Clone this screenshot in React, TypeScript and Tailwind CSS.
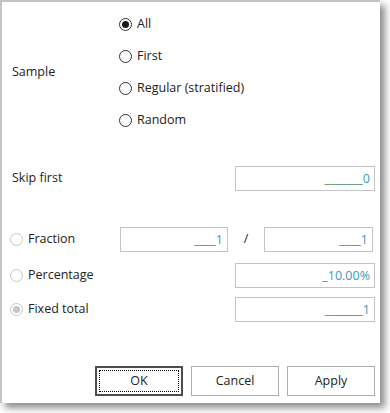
import React from "react";

function Radio({ state }: { state: "on" | "off" | "dis" | "dison" }) {
  const border = state === "on" || state === "off" ? "border-[#333333]" : "border-[#c6c6c6]";
  return (
    <span className={`relative inline-flex h-[13px] w-[13px] shrink-0 items-center justify-center rounded-full border bg-white ${border}`}>
      {state === "on" && <span className="h-[7px] w-[7px] rounded-full bg-[#1a1a1a]" />}
      {state === "dison" && <span className="h-[7px] w-[7px] rounded-full bg-[#c6c6c6]" />}
    </span>
  );
}

function Field({ under, value, w }: { under: string; value: string; w: string }) {
  return (
    <div className={`flex h-full ${w} items-center justify-end border border-[#c4c4c4] bg-white pr-[4px] pt-[2px]`}>
      <span className="text-[#4f8f6c]">{under}</span>
      <span className="text-[#3f97bf]">{value}</span>
    </div>
  );
}

export default function App() {
  return (
    <div className="h-[413px] w-[390px] bg-white" style={{ fontFamily: '"Open Sans", "Noto Sans", sans-serif' }}>
      <div className="flex h-[403px] w-[380px] flex-col border-l-2 border-t-2 border-[#c4c4c4] bg-white text-[12.5px] leading-none text-[#222222] shadow-[5px_5px_7px_rgba(0,0,0,0.45)]">
        {/* Sample */}
        <div className="mt-[6px] flex h-[128px]">
          <div className="flex w-[117px] items-center pl-[10px]">Sample</div>
          <div className="flex flex-col">
            {[
              ["All", "on"],
              ["First", "off"],
              ["Regular (stratified)", "off"],
              ["Random", "off"],
            ].map(([t, s]) => (
              <div key={t} className="flex h-[32px] items-center gap-[5px]">
                <Radio state={s as "on" | "off"} />
                <span>{t}</span>
              </div>
            ))}
          </div>
        </div>

        {/* Skip first */}
        <div className="mt-[30px] flex h-[25px] items-center">
          <div className="flex-1 pl-[10px]">Skip first</div>
          <div className="mr-[5px] h-full">
            <Field under="_______" value="0" w="w-[140px]" />
          </div>
        </div>

        {/* Fraction */}
        <div className="mt-[36px] flex h-[25px] items-center">
          <div className="flex w-[118px] items-center gap-[5px] pl-[8px]">
            <Radio state="dis" />
            <span>Fraction</span>
          </div>
          <Field under="____" value="1" w="w-[108px]" />
          <div className="w-[36px] text-center">/</div>
          <Field under="____" value="1" w="w-[109px]" />
        </div>

        {/* Percentage */}
        <div className="mt-[11px] flex h-[25px] items-center">
          <div className="flex flex-1 items-center gap-[5px] pl-[8px]">
            <Radio state="dis" />
            <span>Percentage</span>
          </div>
          <div className="mr-[5px] h-full">
            <Field under="_" value="10.00%" w="w-[140px]" />
          </div>
        </div>

        {/* Fixed total */}
        <div className="mt-[9px] flex h-[25px] items-center">
          <div className="flex flex-1 items-center gap-[5px] pl-[8px]">
            <Radio state="dison" />
            <span>Fixed total</span>
          </div>
          <div className="mr-[5px] h-full">
            <Field under="_______" value="1" w="w-[140px]" />
          </div>
        </div>

        {/* Buttons */}
        <div className="mt-[44px] flex justify-end gap-[8px] pr-[5px]">
          <button className="flex h-[30px] w-[88px] items-center justify-center border-2 border-[#4d4d4d] bg-white p-[2px]">
            <span className="flex h-full w-full items-center justify-center border border-dotted border-black">OK</span>
          </button>
          <button className="flex h-[30px] w-[88px] items-center justify-center border border-[#adadad] bg-white">Cancel</button>
          <button className="flex h-[30px] w-[88px] items-center justify-center border border-[#adadad] bg-white">Apply</button>
        </div>
      </div>
    </div>
  );
}
